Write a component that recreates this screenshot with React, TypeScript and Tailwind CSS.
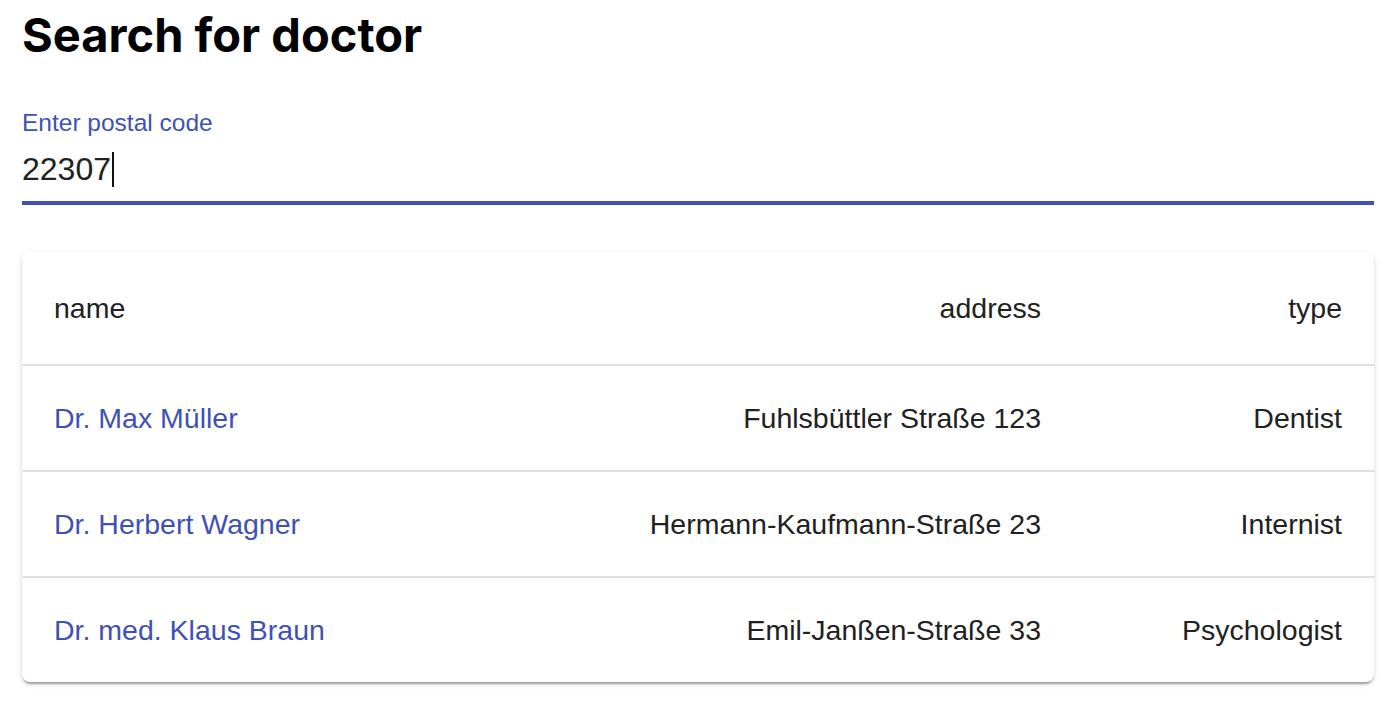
const doctors = [
  { name: "Dr. Max Müller", address: "Fuhlsbüttler Straße 123", type: "Dentist" },
  { name: "Dr. Herbert Wagner", address: "Hermann-Kaufmann-Straße 23", type: "Internist" },
  { name: "Dr. med. Klaus Braun", address: "Emil-Janßen-Straße 33", type: "Psychologist" },
];

function PostalCodeField() {
  return (
    <div className="mt-[47px] flex flex-col">
      <label className="text-[24.5px] leading-[24px] text-[#3f51b5]">Enter postal code</label>
      <div className="mt-[18px] flex h-[32px] items-center text-[32px] leading-[32px] text-[#212121]">
        <span>22307</span>
        <span className="ml-[1px] h-[35px] w-[2px] bg-[#111]" />
      </div>
      <div className="mt-[16px] h-[4px] w-full bg-[#3f51b5]" />
    </div>
  );
}

function DoctorTable() {
  return (
    <div className="mt-[47px] overflow-hidden rounded-[8px] bg-white shadow-[0_4px_2px_-2px_rgba(0,0,0,0.2),0_2px_2px_0_rgba(0,0,0,0.14),0_2px_6px_0_rgba(0,0,0,0.12)]">
      <table className="w-full table-fixed border-collapse text-[28.5px] text-[#212121]">
        <colgroup>
          <col />
          <col className="w-[560px]" />
          <col className="w-[301px]" />
        </colgroup>
        <thead>
          <tr className="border-b-2 border-[#e0e0e0]">
            <th className="px-[32px] py-[32px] text-left font-normal leading-[48px]">name</th>
            <th className="px-[32px] py-[32px] text-right font-normal leading-[48px]">address</th>
            <th className="px-[32px] py-[32px] text-right font-normal leading-[48px]">type</th>
          </tr>
        </thead>
        <tbody>
          {doctors.map((d) => (
            <tr key={d.name} className="border-b-2 border-[#e0e0e0] last:border-b-0">
              <td className="px-[32px] py-[32px] leading-[40px]">
                <a href="#" className="text-[#3f51b5]">
                  {d.name}
                </a>
              </td>
              <td className="whitespace-nowrap px-[32px] py-[32px] text-right leading-[40px]">{d.address}</td>
              <td className="px-[32px] py-[32px] text-right leading-[40px]">{d.type}</td>
            </tr>
          ))}
        </tbody>
      </table>
    </div>
  );
}

export default function App() {
  return (
    <div className="min-h-screen bg-white pl-[22px] pr-[20px] pt-[6px] font-['Liberation_Sans',Arial,sans-serif]">
      <h1 className="font-['Inter',sans-serif] text-[47px] font-bold leading-[58px] text-black">Search for doctor</h1>
      <PostalCodeField />
      <DoctorTable />
    </div>
  );
}
